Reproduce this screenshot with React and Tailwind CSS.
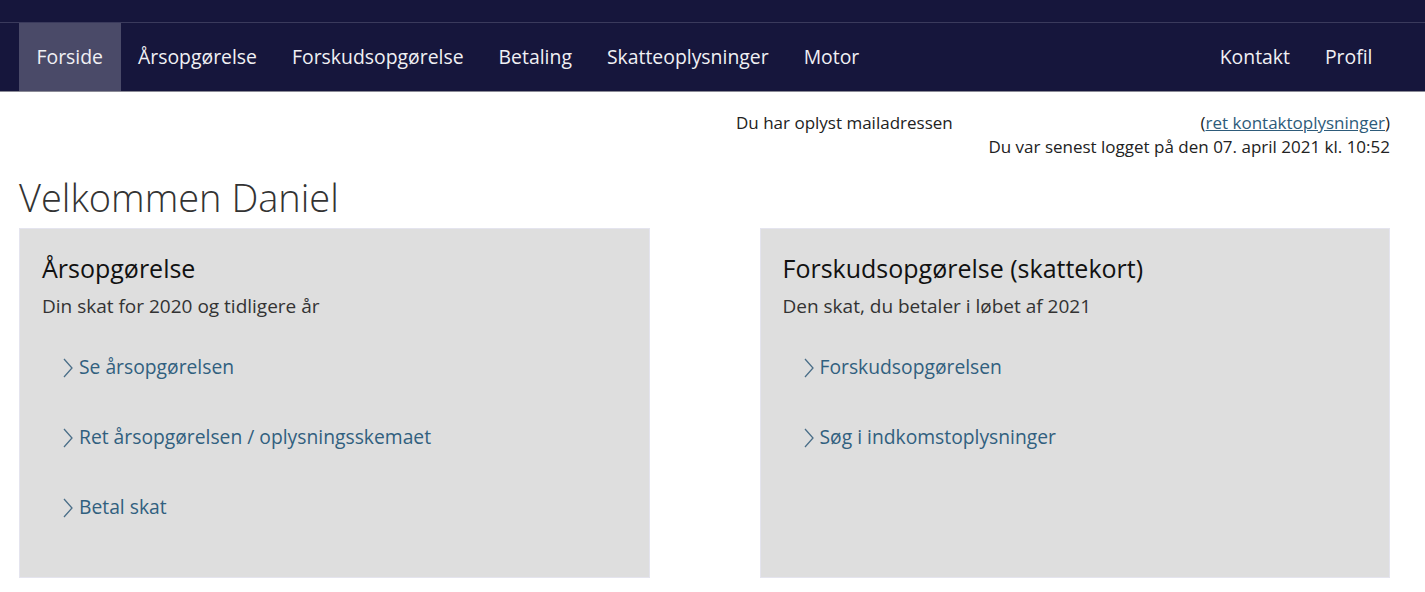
import React from 'react';

const navLeft = ['Forside', 'Årsopgørelse', 'Forskudsopgørelse', 'Betaling', 'Skatteoplysninger', 'Motor'];
const navRight = ['Kontakt', 'Profil'];

const cards = [
  {
    title: 'Årsopgørelse',
    sub: 'Din skat for 2020 og tidligere år',
    links: ['Se årsopgørelsen', 'Ret årsopgørelsen / oplysningsskemaet', 'Betal skat'],
  },
  {
    title: 'Forskudsopgørelse (skattekort)',
    sub: 'Den skat, du betaler i løbet af 2021',
    links: ['Forskudsopgørelsen', 'Søg i indkomstoplysninger'],
  },
];

const Chevron = () => (
  <svg width="12" height="22" viewBox="0 0 12 22" className="mr-[5px] mt-[2px]">
    <path d="M2 2 L10 11 L2 20" fill="none" stroke="#4a6e88" strokeWidth="1.3" />
  </svg>
);

const Card = ({ title, sub, links }) => (
  <div className="h-[350px] bg-[#dedede] border border-[#e4e4ee] pl-[22px] pt-[23px]">
    <h2 className="text-[25px] leading-[32px] text-[#111]">{title}</h2>
    <p className="mt-[9px] text-[19px] leading-[26px] text-[#333]">{sub}</p>
    <ul className="mt-[35px] pl-[20px] flex flex-col gap-[44px]">
      {links.map((l) => (
        <li key={l} className="flex items-center text-[19.3px] leading-[26px] text-[#31607f]">
          <Chevron />
          <a href="#">{l}</a>
        </li>
      ))}
    </ul>
  </div>
);

export default function App() {
  return (
    <div className="min-h-[592px] bg-white font-['Open_Sans',sans-serif]">
      {/* top bar */}
      <div className="bg-[#16163c]">
        <div className="h-[23px] border-b border-[#3a3a5c]" />
        <nav className="h-[69px] pl-[19px] pr-[35px] flex justify-between border-b border-[#8a8a96]">
          <ul className="flex">
            {navLeft.map((n, i) => (
              <li
                key={n}
                className={`flex items-center px-[17.5px] text-[19.4px] text-[#f0f0f4] ${i === 0 ? 'bg-[#4a4a68]' : ''}`}
              >
                {n}
              </li>
            ))}
          </ul>
          <ul className="flex">
            {navRight.map((n) => (
              <li key={n} className="flex items-center px-[17.5px] text-[19.4px] text-[#f0f0f4]">
                {n}
              </li>
            ))}
          </ul>
        </nav>
      </div>

      <div className="ml-[19px] w-[1371px]">
        {/* kontaktinfo */}
        <div className="pt-[19px] text-[17px] leading-[24px] text-[#222]">
          <div className="flex pl-[717px] justify-between">
            <span>Du har oplyst mailadressen</span>
            <span>
              (<a href="#" className="underline text-[#2e5b7a]">ret kontaktoplysninger</a>)
            </span>
          </div>
          <div className="text-right">Du var senest logget på den 07. april 2021 kl. 10:52</div>
        </div>

        <h1 className="mt-[15px] text-[38px] leading-[46px] font-light text-[#333]">Velkommen Daniel</h1>

        <div className="mt-[8px] grid grid-cols-2 gap-[110px]">
          {cards.map((c) => (
            <Card key={c.title} {...c} />
          ))}
        </div>
      </div>
    </div>
  );
}
